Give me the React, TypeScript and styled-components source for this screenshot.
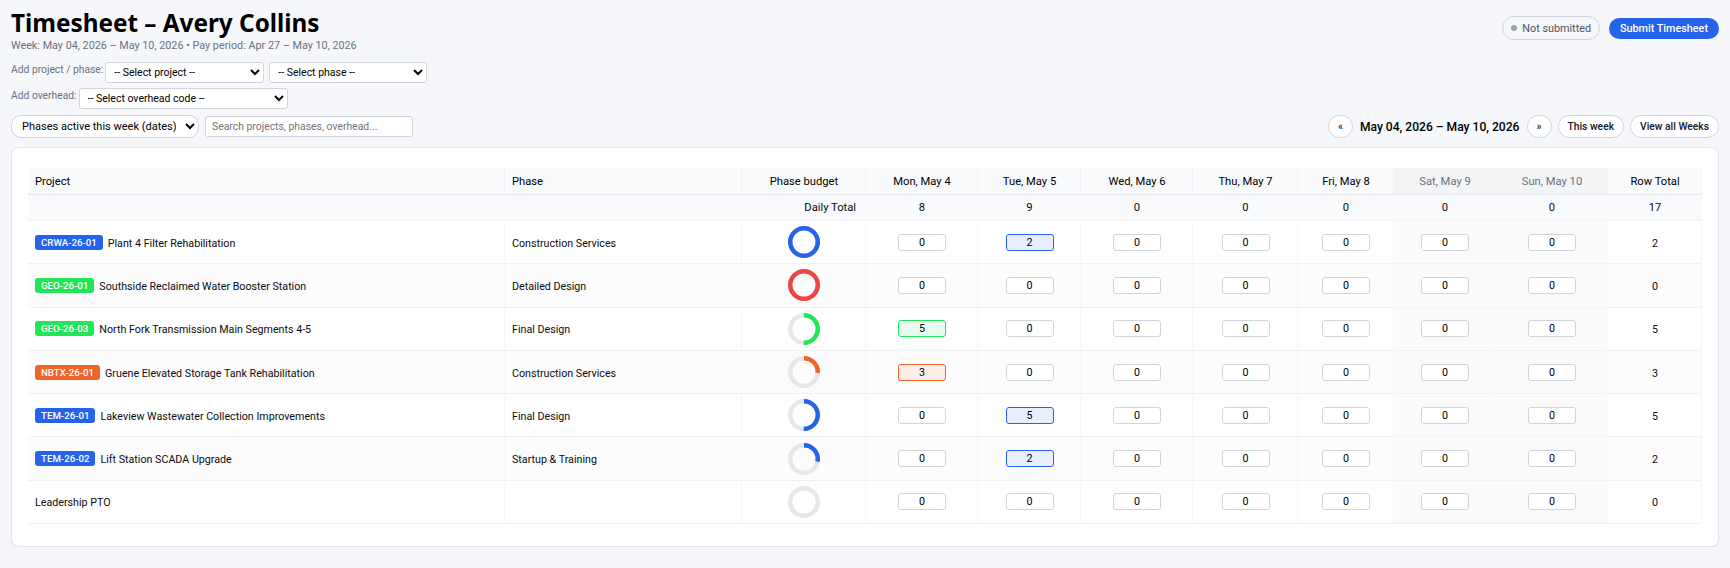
import styled, { createGlobalStyle } from "styled-components";

const GlobalStyle = createGlobalStyle`
  html, body {
    margin: 0;
    background: #f5f7fb;
    color: #0b0b0f;
    font-family: Roboto, "Noto Sans", sans-serif;
  }
`;

const Page = styled.div`
  padding: 8px 11px 0;
`;

const TopBar = styled.header`
  display: flex;
  justify-content: space-between;
  align-items: flex-start;
`;

const Title = styled.h1`
  margin: 0;
  font-family: "Noto Sans", sans-serif;
  font-size: 24.3px;
  line-height: 30px;
  font-weight: 700;
  color: #000;
`;

const Subtitle = styled.div`
  font-size: 10.8px;
  line-height: 15px;
  color: #6b7280;
`;

const StatusGroup = styled.div`
  display: flex;
  align-items: center;
  gap: 9px;
  padding-top: 8px;
`;

const StatusPill = styled.div`
  display: flex;
  align-items: center;
  gap: 5px;
  box-sizing: border-box;
  height: 24px;
  padding: 0 8px;
  border: 1px solid #d1d5db;
  border-radius: 12px;
  font-size: 10.8px;
  color: #4b5563;
`;

const StatusDot = styled.span`
  width: 6px;
  height: 6px;
  border-radius: 50%;
  background: #9ca3af;
`;

const SubmitButton = styled.button`
  box-sizing: border-box;
  width: 110px;
  height: 21px;
  padding: 0;
  border: 0;
  border-radius: 11px;
  background: #2563eb;
  color: #fff;
  font-family: inherit;
  font-size: 10.8px;
  font-weight: 500;
`;

const AddRow = styled.div<{ $top: number }>`
  display: flex;
  align-items: flex-start;
  gap: 2px;
  margin-top: ${(props) => props.$top}px;
`;

const AddLabel = styled.label`
  font-size: 10.3px;
  line-height: 15px;
  color: #6b7280;
`;

const PlainSelect = styled.select<{ $width: number }>`
  box-sizing: border-box;
  width: ${(props) => props.$width}px;
  height: 21px;
  padding: 0 4px;
  margin-right: 3px;
  border: 1px solid #d1d5db;
  border-radius: 3px;
  background: #fff;
  color: #000;
  font-family: Roboto, sans-serif;
  font-size: 10.5px;
`;

const Toolbar = styled.div`
  display: flex;
  justify-content: space-between;
  align-items: center;
  margin-top: 6px;
`;

const ToolGroup = styled.div`
  display: flex;
  align-items: center;
  gap: 6px;
`;

const ViewSelect = styled.select`
  box-sizing: border-box;
  width: 188px;
  height: 23px;
  padding: 0 6px;
  border: 1px solid #d1d5db;
  border-radius: 10px;
  background: #fff;
  color: #000;
  font-family: Roboto, sans-serif;
  font-size: 11px;
`;

const SearchInput = styled.input`
  box-sizing: border-box;
  width: 208px;
  height: 21px;
  padding: 0 6px;
  border: 1px solid #d1d5db;
  border-radius: 3px;
  background: #fff;
  font-family: inherit;
  font-size: 10.4px;

  &::placeholder {
    color: #757575;
  }
`;

const RoundButton = styled.button<{ $square?: boolean }>`
  box-sizing: border-box;
  height: 23px;
  width: ${(props) => (props.$square ? "25px" : "auto")};
  padding: ${(props) => (props.$square ? "0" : "0 9px")};
  border: 1px solid #d1d5db;
  border-radius: 12px;
  background: #fff;
  color: #111827;
  font-family: inherit;
  font-size: 10.3px;
  font-weight: 500;
`;

const WeekRange = styled.div`
  padding: 0 1px;
  font-size: 12.1px;
  font-weight: 500;
  color: #000;
`;

const Card = styled.section`
  box-sizing: border-box;
  height: 400px;
  margin-top: 9px;
  padding: 20px 16px;
  border: 1px solid #e5e7eb;
  border-radius: 8px;
  background: #fff;
  box-shadow: 0 1px 2px rgba(0, 0, 0, 0.06);
`;

const Table = styled.table`
  width: 1674px;
  table-layout: fixed;
  border-collapse: separate;
  border-spacing: 0;
  font-size: 10.7px;
`;

const HeadCell = styled.th<{ $align?: string; $weekend?: boolean }>`
  height: 27px;
  padding: 0 6px 0 7px;
  box-sizing: border-box;
  text-align: ${(props) => props.$align || "center"};
  font-size: 11.2px;
  font-weight: 400;
  color: ${(props) => (props.$weekend ? "#6b7280" : "#000")};
  background: ${(props) => (props.$weekend ? "#f3f4f6" : "#f9fafb")};
  border-bottom: 1px solid #e5e7eb;
  border-right: 1px solid ${(props) => (props.$weekend ? "#f3f4f6" : "#f1f2f5")};
`;

const TotalCell = styled.td<{ $align?: string }>`
  box-sizing: border-box;
  height: 26px;
  padding: 0 10px;
  text-align: ${(props) => props.$align || "center"};
  font-size: 11.2px;
  background: #f9fafb;
  border-bottom: 1px solid #f0f1f4;
`;

const DataRow = styled.tr`
  &:nth-child(even) td {
    background-color: #fcfcfd;
  }
`;

const DataCell = styled.td<{ $align?: string; $weekend?: boolean; $text?: boolean }>`
  box-sizing: border-box;
  height: 43.3px;
  padding: ${(props) => (props.$text ? "2px" : "0")} 6px 0 7px;
  text-align: ${(props) => props.$align || "center"};
  border-bottom: 1px solid #f0f1f4;
  border-right: 1px solid #f6f7f9;
  ${(props) => props.$weekend && "background-color: #fafafb !important; border-right-color: #fafafb;"}
`;

const ProjectLabel = styled.div`
  display: flex;
  align-items: center;
  gap: 5px;
`;

const ProjectName = styled.span`
  padding-top: 2px;
`;

const Badge = styled.span<{ $color: string }>`
  padding: 0 6px;
  border-radius: 3px;
  line-height: 15px;
  background: ${(props) => props.$color};
  color: #fff;
  font-size: 9.7px;
  font-weight: 500;
`;

const RingSvg = styled.svg`
  display: block;
  margin: 0 auto;
`;

const HoursInput = styled.input<{ $color?: string; $tint?: string }>`
  display: block;
  box-sizing: border-box;
  width: 48px;
  height: 17px;
  margin: 0 auto;
  padding: 0;
  border: 1px solid ${(props) => props.$color || "#d1d5db"};
  border-radius: 3px;
  background: ${(props) => props.$tint || "#fff"};
  color: #000;
  text-align: center;
  font-family: Roboto, sans-serif;
  font-size: 10.7px;
`;

const COLORS = {
  blue: "#2563eb",
  green: "#22e55a",
  orange: "#f0642a",
  red: "#ef4444",
};

const TINTS: Record<string, string> = {
  [COLORS.blue]: "#e8eefc",
  [COLORS.green]: "#e8fbee",
  [COLORS.orange]: "#fbeee9",
};

const DAYS = [
  { label: "Mon, May 4", width: 112, total: 8 },
  { label: "Tue, May 5", width: 103, total: 9 },
  { label: "Wed, May 6", width: 112, total: 0 },
  { label: "Thu, May 7", width: 105, total: 0 },
  { label: "Fri, May 8", width: 96, total: 0 },
  { label: "Sat, May 9", width: 102, total: 0, weekend: true },
  { label: "Sun, May 10", width: 112, total: 0, weekend: true },
];

type Row = {
  code?: string;
  color: string;
  name: string;
  phase: string;
  pct: number;
  hours: number[];
  ringColor?: string;
};

const ROWS: Row[] = [
  { code: "CRWA-26-01", color: COLORS.blue, name: "Plant 4 Filter Rehabilitation", phase: "Construction Services", pct: 100, hours: [0, 2, 0, 0, 0, 0, 0] },
  { code: "GEO-26-01", color: COLORS.green, name: "Southside Reclaimed Water Booster Station", phase: "Detailed Design", pct: 100, ringColor: COLORS.red, hours: [0, 0, 0, 0, 0, 0, 0] },
  { code: "GEO-26-03", color: COLORS.green, name: "North Fork Transmission Main Segments 4-5", phase: "Final Design", pct: 50, hours: [5, 0, 0, 0, 0, 0, 0] },
  { code: "NBTX-26-01", color: COLORS.orange, name: "Gruene Elevated Storage Tank Rehabilitation", phase: "Construction Services", pct: 26, hours: [3, 0, 0, 0, 0, 0, 0] },
  { code: "TEM-26-01", color: COLORS.blue, name: "Lakeview Wastewater Collection Improvements", phase: "Final Design", pct: 50, hours: [0, 5, 0, 0, 0, 0, 0] },
  { code: "TEM-26-02", color: COLORS.blue, name: "Lift Station SCADA Upgrade", phase: "Startup & Training", pct: 28, hours: [0, 2, 0, 0, 0, 0, 0] },
  { color: COLORS.blue, name: "Leadership PTO", phase: "", pct: 0, hours: [0, 0, 0, 0, 0, 0, 0] },
];

function BudgetRing({ pct, color }: { pct: number; color: string }) {
  const radius = 13.75;
  const length = 2 * Math.PI * radius;
  return (
    <RingSvg width="32" height="32" viewBox="0 0 32 32">
      <circle cx="16" cy="16" r={radius} fill="none" stroke="#e5e7eb" strokeWidth="4.5" />
      {pct > 0 && (
        <circle
          cx="16"
          cy="16"
          r={radius}
          fill="none"
          stroke={color}
          strokeWidth="4.5"
          strokeDasharray={`${(length * pct) / 100} ${length}`}
          transform="rotate(-90 16 16)"
        />
      )}
    </RingSvg>
  );
}

export default function App() {
  return (
    <Page>
      <GlobalStyle />
      <TopBar>
        <div>
          <Title>Timesheet – Avery Collins</Title>
          <Subtitle>Week: May 04, 2026 – May 10, 2026 • Pay period: Apr 27 – May 10, 2026</Subtitle>
        </div>
        <StatusGroup>
          <StatusPill>
            <StatusDot />
            Not submitted
          </StatusPill>
          <SubmitButton>Submit Timesheet</SubmitButton>
        </StatusGroup>
      </TopBar>

      <AddRow $top={9}>
        <AddLabel>Add project / phase:</AddLabel>
        <PlainSelect $width={159}>
          <option>-- Select project --</option>
        </PlainSelect>
        <PlainSelect $width={158}>
          <option>-- Select phase --</option>
        </PlainSelect>
      </AddRow>
      <AddRow $top={5}>
        <AddLabel>Add overhead:</AddLabel>
        <PlainSelect $width={209}>
          <option>-- Select overhead code --</option>
        </PlainSelect>
      </AddRow>

      <Toolbar>
        <ToolGroup>
          <ViewSelect>
            <option>Phases active this week (dates)</option>
          </ViewSelect>
          <SearchInput placeholder="Search projects, phases, overhead..." />
        </ToolGroup>
        <ToolGroup>
          <RoundButton $square>«</RoundButton>
          <WeekRange>May 04, 2026 – May 10, 2026</WeekRange>
          <RoundButton $square>»</RoundButton>
          <RoundButton>This week</RoundButton>
          <RoundButton>View all Weeks</RoundButton>
        </ToolGroup>
      </Toolbar>

      <Card>
        <Table>
          <colgroup>
            <col style={{ width: 477 }} />
            <col style={{ width: 237 }} />
            <col style={{ width: 124 }} />
            {DAYS.map((day) => (
              <col key={day.label} style={{ width: day.width }} />
            ))}
            <col style={{ width: 94 }} />
          </colgroup>
          <thead>
            <tr>
              <HeadCell $align="left">Project</HeadCell>
              <HeadCell $align="left">Phase</HeadCell>
              <HeadCell>Phase budget</HeadCell>
              {DAYS.map((day) => (
                <HeadCell key={day.label} $weekend={day.weekend}>
                  {day.label}
                </HeadCell>
              ))}
              <HeadCell>Row Total</HeadCell>
            </tr>
            <tr>
              <TotalCell />
              <TotalCell />
              <TotalCell $align="right">Daily Total</TotalCell>
              {DAYS.map((day) => (
                <TotalCell key={day.label}>{day.total}</TotalCell>
              ))}
              <TotalCell>17</TotalCell>
            </tr>
          </thead>
          <tbody>
            {ROWS.map((row) => (
              <DataRow key={row.name}>
                <DataCell $align="left">
                  <ProjectLabel>
                    {row.code && <Badge $color={row.color}>{row.code}</Badge>}
                    <ProjectName>{row.name}</ProjectName>
                  </ProjectLabel>
                </DataCell>
                <DataCell $align="left" $text>
                  {row.phase}
                </DataCell>
                <DataCell>
                  <BudgetRing pct={row.pct} color={row.ringColor || row.color} />
                </DataCell>
                {row.hours.map((value, index) => (
                  <DataCell key={DAYS[index].label} $weekend={DAYS[index].weekend}>
                    <HoursInput
                      defaultValue={value}
                      $color={value > 0 ? row.color : undefined}
                      $tint={value > 0 ? TINTS[row.color] : undefined}
                    />
                  </DataCell>
                ))}
                <DataCell $text>{row.hours.reduce((sum, value) => sum + value, 0)}</DataCell>
              </DataRow>
            ))}
          </tbody>
        </Table>
      </Card>
    </Page>
  );
}
